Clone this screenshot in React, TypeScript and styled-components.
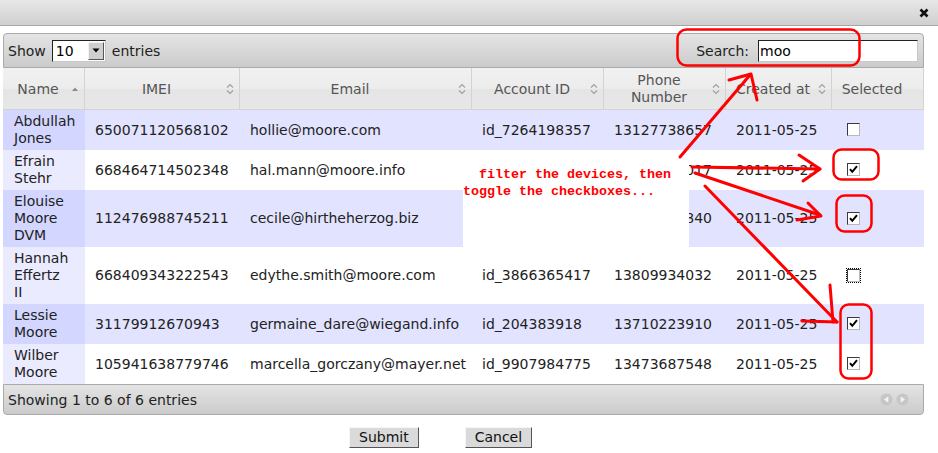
import React from 'react';
import styled, { createGlobalStyle } from 'styled-components';

const GlobalStyle = createGlobalStyle`
  html, body { margin: 0; padding: 0; background: #fff; }
  body { font-family: "DejaVu Sans", Verdana, sans-serif; font-size: 14px; color: #222; }
  * { box-sizing: border-box; }
`;

const Dialog = styled.div`
  position: relative;
  width: 938px;
  height: 453px;
  overflow: hidden;
`;

const TitleBar = styled.div`
  height: 26px;
  border-bottom: 1px solid #a6a6a6;
  background: linear-gradient(#e8e8e8, #cfcfcf);
  display: flex;
  align-items: center;
  justify-content: flex-end;
  padding-right: 9px;
`;

const Content = styled.div`
  padding: 7px 0 0 3px;
`;

const Frame = styled.div`
  width: 921px;
`;

const Toolbar = styled.div`
  height: 35px;
  border: 1px solid #aaa;
  border-radius: 4px 4px 0 0;
  background: linear-gradient(#e4e4e4, #cbcbcb);
  display: flex;
  align-items: center;
  justify-content: space-between;
  padding: 0 5px 0 4px;
`;

const Group = styled.div`
  display: flex;
  align-items: center;
  gap: 6px;
`;

const SearchGroup = styled(Group)`
  gap: 9px;
`;

const SelectBox = styled.div`
  width: 54px;
  height: 22px;
  border: 1px solid;
  border-color: #222 #c8c8c8 #c8c8c8 #222;
  background: #fff;
  display: flex;
  align-items: stretch;
`;

const SelectValue = styled.span`
  flex: 1;
  padding-left: 3px;
  line-height: 20px;
  color: #000;
`;

const DropButton = styled.span`
  width: 16px;
  margin: 1px;
  background: #cfcfcf;
  border: 1px solid;
  border-color: #f2f2f2 #555 #555 #f2f2f2;
  display: flex;
  align-items: center;
  justify-content: center;
`;

const SearchInput = styled.div`
  width: 160px;
  height: 22px;
  border: 1px solid;
  border-color: #222 #c8c8c8 #c8c8c8 #222;
  background: #fff;
  padding-left: 1px;
  line-height: 20px;
  color: #000;
`;

const Table = styled.table`
  width: 921px;
  table-layout: fixed;
  border-collapse: separate;
  border-spacing: 0;
`;

const Th = styled.th`
  box-sizing: border-box;
  height: 42px;
  padding: 0 5px 0 6px;
  border-right: 1px solid #d3d3d3;
  border-bottom: 1px solid #d3d3d3;
  background: linear-gradient(#f1f1f1 0%, #ececec 50%, #e5e5e5 52%, #e7e7e7 100%);
  font-weight: normal;
  color: #555;
  vertical-align: middle;
`;

const HeadInner = styled.div`
  display: flex;
  align-items: center;
  padding-top: 1px;
`;

const HeadLabel = styled.span`
  flex: 1;
  text-align: center;
  line-height: 17px;
`;

const IconSlot = styled.span`
  width: 8px;
  margin-left: 4px;
  display: flex;
  justify-content: center;
`;

const rowBg = (odd: boolean, sorted: boolean) =>
  odd ? (sorted ? '#D3D6FF' : '#E2E4FF') : sorted ? '#EAEBFF' : '#FFFFFF';

const Td = styled.td<{ $odd: boolean; $sorted?: boolean }>`
  padding: 3px 8px 3px 10px;
  line-height: 17px;
  vertical-align: middle;
  white-space: nowrap;
  color: #222;
  background: ${(p) => rowBg(p.$odd, !!p.$sorted)};
`;

const NameTd = styled(Td)`
  padding-left: 11px;
  white-space: pre-line;
`;

const CheckTd = styled(Td)`
  padding-left: 15px;
`;

const Check = styled.span<{ $focused?: boolean }>`
  display: inline-block;
  vertical-align: middle;
  width: 13px;
  height: 13px;
  border: 1px solid;
  border-color: #3a3a3a #b8b8b8 #b8b8b8 #3a3a3a;
  background: #fff;
  outline: ${(p) => (p.$focused ? '1px dotted #000' : 'none')};
  outline-offset: 0;
  position: relative;
  top: -1px;
`;

const Footer = styled.div`
  height: 31px;
  border: 1px solid #aaa;
  border-radius: 0 0 4px 4px;
  background: linear-gradient(#e4e4e4, #cbcbcb);
  display: flex;
  align-items: center;
  justify-content: space-between;
  padding: 0 14px 0 4px;
  color: #222;
`;

const ButtonRow = styled.div`
  display: flex;
  gap: 46px;
  padding-left: 346px;
  margin-top: 12px;
`;

const Button = styled.button`
  height: 21px;
  padding: 0 9px;
  background: #dadada;
  border: 1px solid;
  border-color: #f6f6f6 #555 #555 #f6f6f6;
  font-family: "DejaVu Sans", Verdana, sans-serif;
  font-size: 14px;
  line-height: 17px;
  color: #111;
`;

const NoteBox = styled.div`
  position: absolute;
  left: 463px;
  top: 150px;
  width: 226px;
  height: 97px;
  background: #fff;
  padding-top: 16px;
  font-family: "Liberation Mono", "DejaVu Sans Mono", monospace;
  font-weight: bold;
  font-size: 13.33px;
  line-height: 17px;
  color: #ff0000;
  white-space: pre;
`;

const Scribble = styled.svg`
  position: absolute;
  left: 0;
  top: 0;
  pointer-events: none;
`;

const SortBoth = () => (
  <svg width="8" height="12" viewBox="0 0 8 12">
    <path d="M1 4.5 L4 1.5 L7 4.5 M1 7.5 L4 10.5 L7 7.5" fill="none" stroke="#a0a0a0" strokeWidth="1.2" />
  </svg>
);

const SortAsc = () => (
  <svg width="8" height="6" viewBox="0 0 8 6">
    <path d="M1 5 L4 1.5 L7 5 Z" fill="#8a8a8a" />
  </svg>
);

const CheckMark = () => (
  <svg width="11" height="11" viewBox="0 0 11 11" style={{ display: 'block' }}>
    <path d="M2 5.2 L4.3 7.8 L9 2.2" fill="none" stroke="#000" strokeWidth="2" />
  </svg>
);

type Row = {
  name: string;
  imei: string;
  email: string;
  account: string;
  phone: string;
  created: string;
  checked: boolean;
  focused?: boolean;
};

const rows: Row[] = [
  { name: 'Abdullah\nJones', imei: '650071120568102', email: 'hollie@moore.com', account: 'id_7264198357', phone: '13127738657', created: '2011-05-25', checked: false },
  { name: 'Efrain\nStehr', imei: '668464714502348', email: 'hal.mann@moore.info', account: '', phone: '13650821017', created: '2011-05-25', checked: true },
  { name: 'Elouise\nMoore\nDVM', imei: '112476988745211', email: 'cecile@hirtheherzog.biz', account: '', phone: '13295017840', created: '2011-05-25', checked: true },
  { name: 'Hannah\nEffertz\nII', imei: '668409343222543', email: 'edythe.smith@moore.com', account: 'id_3866365417', phone: '13809934032', created: '2011-05-25', checked: false, focused: true },
  { name: 'Lessie\nMoore', imei: '31179912670943', email: 'germaine_dare@wiegand.info', account: 'id_204383918', phone: '13710223910', created: '2011-05-25', checked: true },
  { name: 'Wilber\nMoore', imei: '105941638779746', email: 'marcella_gorczany@mayer.net', account: 'id_9907984775', phone: '13473687548', created: '2011-05-25', checked: true },
];

const columns: { label: string; width: number; icon: 'asc' | 'both' | 'none' }[] = [
  { label: 'Name', width: 82, icon: 'asc' },
  { label: 'IMEI', width: 155, icon: 'both' },
  { label: 'Email', width: 232, icon: 'both' },
  { label: 'Account ID', width: 132, icon: 'both' },
  { label: 'Phone Number', width: 122, icon: 'both' },
  { label: 'Created at', width: 106, icon: 'both' },
  { label: 'Selected', width: 92, icon: 'none' },
];

const RED = '#ff0000';

export default function App() {
  return (
    <>
      <GlobalStyle />
      <Dialog>
        <TitleBar>
          <svg width="10" height="10" viewBox="0 0 10 10">
            <path d="M1.5 1.5 L8.5 8.5 M8.5 1.5 L1.5 8.5" stroke="#111" strokeWidth="2.6" />
          </svg>
        </TitleBar>
        <Content>
          <Frame>
            <Toolbar>
              <Group>
                <span>Show</span>
                <SelectBox>
                  <SelectValue>10</SelectValue>
                  <DropButton>
                    <svg width="8" height="5" viewBox="0 0 8 5">
                      <path d="M0.5 0.5 L7.5 0.5 L4 4.5 Z" fill="#000" />
                    </svg>
                  </DropButton>
                </SelectBox>
                <span>entries</span>
              </Group>
              <SearchGroup>
                <span>Search:</span>
                <SearchInput>moo</SearchInput>
              </SearchGroup>
            </Toolbar>
            <Table>
              <colgroup>
                {columns.map((c) => (
                  <col key={c.label} style={{ width: c.width }} />
                ))}
              </colgroup>
              <thead>
                <tr>
                  {columns.map((c) => (
                    <Th key={c.label}>
                      <HeadInner>
                        <HeadLabel>{c.label}</HeadLabel>
                        <IconSlot>
                          {c.icon === 'asc' && <SortAsc />}
                          {c.icon === 'both' && <SortBoth />}
                        </IconSlot>
                      </HeadInner>
                    </Th>
                  ))}
                </tr>
              </thead>
              <tbody>
                {rows.map((r, i) => {
                  const odd = i % 2 === 0;
                  return (
                    <tr key={r.imei}>
                      <NameTd $odd={odd} $sorted>{r.name}</NameTd>
                      <Td $odd={odd}>{r.imei}</Td>
                      <Td $odd={odd}>{r.email}</Td>
                      <Td $odd={odd}>{r.account}</Td>
                      <Td $odd={odd}>{r.phone}</Td>
                      <Td $odd={odd}>{r.created}</Td>
                      <CheckTd $odd={odd}>
                        <Check $focused={r.focused}>{r.checked && <CheckMark />}</Check>
                      </CheckTd>
                    </tr>
                  );
                })}
              </tbody>
            </Table>
            <Footer>
              <span>Showing 1 to 6 of 6 entries</span>
              <svg width="29" height="13" viewBox="0 0 29 13">
                <circle cx="6.5" cy="6.5" r="6" fill="#c6c6c6" />
                <path d="M8.3 3.2 L4 6.5 L8.3 9.8 Z" fill="#f4f4f4" />
                <circle cx="22.5" cy="6.5" r="6" fill="#c6c6c6" />
                <path d="M20.7 3.2 L25 6.5 L20.7 9.8 Z" fill="#f4f4f4" />
              </svg>
            </Footer>
          </Frame>
          <ButtonRow>
            <Button>Submit</Button>
            <Button>Cancel</Button>
          </ButtonRow>
        </Content>

        <NoteBox>{'  filter the devices, then\ntoggle the checkboxes...'}</NoteBox>

        <Scribble width="938" height="453" viewBox="0 0 938 453">
          <g fill="none" stroke={RED} strokeLinecap="round" strokeLinejoin="round">
            <rect x="677.5" y="29.5" width="182" height="36" rx="9" strokeWidth="2.5" />
            <rect x="833.5" y="149.5" width="45" height="30" rx="8" strokeWidth="2.5" />
            <rect x="836.5" y="195.5" width="35" height="36" rx="8" strokeWidth="2.5" />
            <rect x="840.5" y="304.5" width="31" height="74" rx="8" strokeWidth="2.5" />
            <g strokeWidth="3">
              <path d="M680 157 L750 75" />
              <path d="M729 80 L751 74 L757 100" />
              <path d="M692 167 L820 169" />
              <path d="M799 155 L820 169 L803 181" />
              <path d="M695 173 L820 215" />
              <path d="M808 203 L821 216 L797 220" />
              <path d="M705 186 L837 322" />
              <path d="M802 321 L837 322" />
              <path d="M830 285 L833 322" />
            </g>
          </g>
        </Scribble>
      </Dialog>
    </>
  );
}
